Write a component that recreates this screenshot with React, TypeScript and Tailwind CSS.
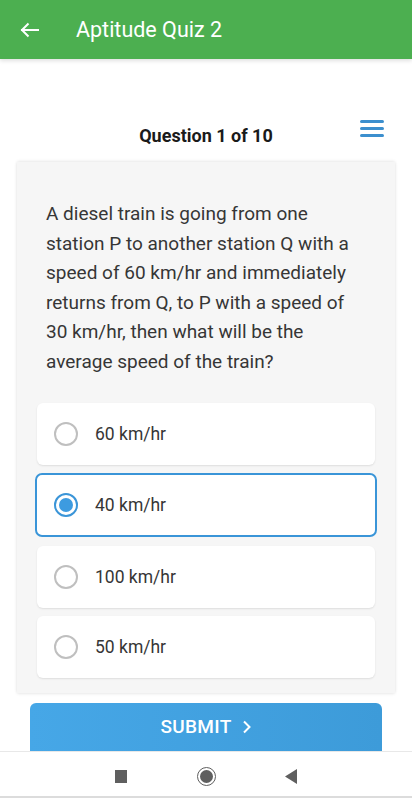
import React from "react";

const options = [
  { label: "60 km/hr", selected: false },
  { label: "40 km/hr", selected: true },
  { label: "100 km/hr", selected: false },
  { label: "50 km/hr", selected: false },
];

function Radio({ selected }: { selected: boolean }) {
  if (selected) {
    return (
      <div className="w-[24px] h-[24px] rounded-full border-2 border-[#3a95d8] flex items-center justify-center shrink-0">
        <div className="w-[14px] h-[14px] rounded-full bg-[#3d9be0]" />
      </div>
    );
  }
  return <div className="w-[24px] h-[24px] rounded-full border-2 border-[#bfbfbf] shrink-0" />;
}

export default function App() {
  return (
    <div
      className="w-[412px] h-[800px] overflow-hidden bg-white flex flex-col relative"
      style={{ fontFamily: "Roboto, 'Noto Sans', sans-serif" }}
    >
      {/* Header */}
      <div className="h-[59px] bg-[#4caf50] flex items-center shrink-0 shadow-[0_2px_4px_rgba(0,0,0,0.12)] relative z-10">
        <svg width="20" height="18" viewBox="0 0 20 18" className="ml-[20px]" fill="none" stroke="white" strokeWidth="2" strokeLinecap="square">
          <line x1="2" y1="9" x2="18" y2="9" />
          <polyline points="8.5,2.5 2,9 8.5,15.5" strokeLinecap="butt" />
        </svg>
        <div className="ml-[36px] text-white text-[21.5px] leading-none">Aptitude Quiz 2</div>
      </div>

      {/* Question header */}
      <div className="h-[103px] shrink-0 relative flex items-end justify-center pb-[17px]">
        <div className="text-[18px] font-bold text-[#1a1a1a] leading-none">Question 1 of 10</div>
        <div className="absolute right-[28px] top-[61px] flex flex-col gap-[4px]">
          <div className="w-[24px] h-[3px] rounded-full bg-[#3c8fce]" />
          <div className="w-[24px] h-[3px] rounded-full bg-[#3c8fce]" />
          <div className="w-[24px] h-[3px] rounded-full bg-[#3c8fce]" />
        </div>
      </div>

      {/* Card */}
      <div className="mx-[17px] h-[531px] shrink-0 bg-[#f6f6f6] shadow-[0_-1px_3px_rgba(0,0,0,0.08),0_1px_3px_rgba(0,0,0,0.08)] flex flex-col">
        <div className="pt-[37px] pl-[29px] pr-[35px] text-[19px] leading-[29.5px] text-[#363636]">
          A diesel train is going from one station P to another station Q with a speed of 60 km/hr and immediately returns from Q, to P with a speed of 30 km/hr, then what will be the average speed of the train?
        </div>
        <div className="flex flex-col mt-[27px]">
          {options.map((o, i) =>
            o.selected ? (
              <div
                key={i}
                className="mx-[18px] h-[64px] mt-[8px] rounded-[7px] border-2 border-[#3a95d8] bg-white flex items-center pl-[17px] mb-[1px]"
              >
                <Radio selected />
                <div className="ml-[17px] text-[17.5px] text-[#363636]">{o.label}</div>
              </div>
            ) : (
              <div
                key={i}
                className={`mx-[20px] h-[62px] rounded-[6px] bg-white shadow-[0_1px_2px_rgba(0,0,0,0.1)] flex items-center pl-[17px] ${i === 0 ? "" : "mt-[8px]"}`}
              >
                <Radio selected={false} />
                <div className="ml-[17px] text-[17.5px] text-[#363636]">{o.label}</div>
              </div>
            )
          )}
        </div>
      </div>

      {/* Submit */}
      <div className="mt-[10px] mx-[30px] h-[48px] shrink-0 rounded-t-[6px] bg-gradient-to-r from-[#46a7e7] to-[#3d9bd9] flex items-center justify-center text-white">
        <span className="text-[19px] font-medium tracking-[0.3px]">SUBMIT</span>
        <svg width="10" height="14" viewBox="0 0 10 14" className="ml-[10px]" fill="none" stroke="white" strokeWidth="2">
          <polyline points="2,1.5 7.5,7 2,12.5" />
        </svg>
      </div>

      {/* Nav bar */}
      <div className="h-[47px] shrink-0 bg-white border-t border-[#e8e8e8] border-b-2 border-b-[#dcdcdc] flex items-center relative">
        <div className="absolute left-[115px] top-[18px] w-[12px] h-[13px] bg-[#5f5f5f]" />
        <div className="absolute left-[197px] top-[15px] w-[19px] h-[19px] rounded-full border-[1.5px] border-[#5f5f5f] flex items-center justify-center">
          <div className="w-[13px] h-[13px] rounded-full bg-[#5f5f5f]" />
        </div>
        <svg className="absolute left-[285px] top-[17px]" width="12" height="15" viewBox="0 0 12 15">
          <polygon points="12,0 12,15 0,7.5" fill="#5f5f5f" />
        </svg>
      </div>
    </div>
  );
}
